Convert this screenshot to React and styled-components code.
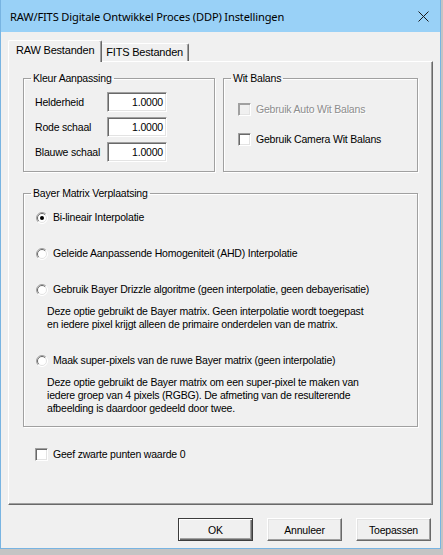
import React from 'react';
import styled, { createGlobalStyle } from 'styled-components';

const GlobalStyle = createGlobalStyle`
  html, body {
    margin: 0;
    padding: 0;
    background: #c4c4c4;
  }
  body {
    font-family: "Liberation Sans", Arial, sans-serif;
    font-size: 10.5px;
    letter-spacing: -0.2px;
    color: #000;
  }
`;

const Window = styled.div`
  width: 441px;
  height: 549px;
  box-sizing: border-box;
  border: 1px solid #78b4e2;
  border-top: none;
  background: #f0f0f0;
  display: flex;
  flex-direction: column;
`;

const TitleBar = styled.div`
  flex: none;
  height: 32px;
  background: #99d1f7;
  display: flex;
  align-items: center;
  justify-content: space-between;
  padding: 0 11px 0 9px;
  font-family: "Noto Sans", sans-serif;
  font-size: 11.1px;
  letter-spacing: -0.15px;
  color: #000;
`;

const Body = styled.div`
  display: flex;
  flex-direction: column;
  padding: 7px 7px 0 7px;
`;

const TabStrip = styled.div`
  display: flex;
  align-items: flex-end;
  height: 22px;
  padding-left: 2px;
`;

const Tab = styled.div`
  position: relative;
  box-sizing: border-box;
  height: ${p => (p.active ? '22px' : '18px')};
  margin: ${p => (p.active ? '0 -2px -1px -2px' : '0')};
  padding: ${p => (p.active ? '3px 7px 0' : '2px 5px 0')};
  z-index: ${p => (p.active ? 1 : 0)};
  background: #f0f0f0;
  border-top: 1px solid #fff;
  border-left: 1px solid #fff;
  border-right: 1px solid #696969;
  border-radius: 2px 2px 0 0;
  box-shadow: inset -1px 0 0 #a0a0a0;
  font-size: 11px;
  white-space: nowrap;
`;

const Panel = styled.div`
  flex: none;
  height: 444px;
  box-sizing: border-box;
  border-top: 1px solid #fff;
  border-left: 1px solid #fff;
  border-right: 1px solid #696969;
  border-bottom: 1px solid #696969;
  box-shadow: inset -1px -1px 0 #a0a0a0;
  padding: 10px 14px 0 14px;
  display: flex;
  flex-direction: column;
`;

const TopRow = styled.div`
  display: grid;
  grid-template-columns: 192px 1fr;
  column-gap: 8px;
`;

const Group = styled.fieldset`
  margin: 0;
  padding: 0;
  min-width: 0;
  height: ${p => p.height || 'auto'};
  box-sizing: border-box;
  border: 1px solid #a0a0a0;
  box-shadow: inset 1px 1px 0 #fff, 1px 1px 0 #fff;
`;

const Legend = styled.legend`
  margin-left: 7px;
  padding: 0 2px;
  line-height: 13px;
`;

const FieldGrid = styled.div`
  display: grid;
  grid-template-columns: 72px 60px;
  row-gap: 5px;
  align-items: center;
  padding: 7px 0 0 11px;
`;

const FieldLabel = styled.span`
  line-height: 13px;
  white-space: nowrap;
`;

const NumberBox = styled.div`
  box-sizing: border-box;
  height: 20px;
  background: #fff;
  border: 1px solid;
  border-color: #a0a0a0 #fff #fff #a0a0a0;
  box-shadow: inset 1px 1px 0 #696969, inset -1px -1px 0 #e3e3e3;
  text-align: right;
  padding: 2px 3px 0 0;
  line-height: 14px;
`;

const CheckList = styled.div`
  display: flex;
  flex-direction: column;
  gap: 17px;
  padding: 18px 0 0 14px;
`;

const CheckRow = styled.label`
  display: flex;
  align-items: center;
  gap: 5px;
  line-height: 13px;
  color: ${p => (p.disabled ? '#8d8d8d' : '#000')};
  text-shadow: ${p => (p.disabled ? '1px 1px 0 #fff' : 'none')};
  margin: ${p => p.margin || '0'};
`;

const Box = styled.span`
  flex: none;
  box-sizing: border-box;
  width: 13px;
  height: 13px;
  background: ${p => (p.disabled ? '#f0f0f0' : '#fff')};
  border: 1px solid;
  border-color: #a0a0a0 #fff #fff #a0a0a0;
  box-shadow: ${p => (p.disabled
    ? 'inset 1px 1px 0 #a0a0a0, inset -1px -1px 0 #e3e3e3'
    : 'inset 1px 1px 0 #696969, inset -1px -1px 0 #e3e3e3')};
`;

const BayerGroup = styled(Group)`
  margin-top: 15px;
`;

const OptionList = styled.div`
  display: flex;
  flex-direction: column;
  gap: 23px;
  padding: 11px 0 11px 12px;
`;

const Option = styled.div`
  display: flex;
  flex-direction: column;
`;

const RadioRow = styled.label`
  display: flex;
  align-items: center;
  gap: 5px;
  line-height: 13px;
`;

const Description = styled.div`
  margin: 9px 0 0 11px;
  line-height: 13px;
`;

const ButtonRow = styled.div`
  display: flex;
  justify-content: flex-end;
  gap: 14px;
  margin-top: 13px;
  padding-right: 2px;
`;

const Button = styled.div`
  box-sizing: border-box;
  width: 75px;
  height: 23px;
  display: flex;
  align-items: center;
  justify-content: center;
  background: #f0f0f0;
  border: 1px solid;
  border-color: ${p => (p.primary ? '#3c3c3c' : '#fff #696969 #696969 #fff')};
  box-shadow: ${p => (p.primary
    ? 'inset 1px 1px 0 #fff, inset -1px -1px 0 #696969, inset -2px -2px 0 #a0a0a0'
    : 'inset -1px -1px 0 #a0a0a0, inset 1px 1px 0 #e3e3e3')};
`;

const CloseIcon = () => (
  <svg width="11" height="11" viewBox="0 0 11 11">
    <path d="M0.5 0.5 L10.5 10.5 M10.5 0.5 L0.5 10.5" stroke="#1a1a1a" strokeWidth="1" fill="none" />
  </svg>
);

const Radio = ({ checked }) => (
  <svg width="12" height="12" viewBox="0 0 12 12">
    <circle cx="6" cy="6" r="5.5" fill="#fff" />
    <path d="M2.1 9.9 A5.5 5.5 0 0 1 9.9 2.1" stroke="#a0a0a0" fill="none" />
    <path d="M2.8 9.2 A4.5 4.5 0 0 1 9.2 2.8" stroke="#696969" fill="none" />
    <path d="M9.9 2.1 A5.5 5.5 0 0 1 2.1 9.9" stroke="#fff" fill="none" />
    <path d="M9.2 2.8 A4.5 4.5 0 0 1 2.8 9.2" stroke="#e3e3e3" fill="none" />
    {checked && <circle cx="6" cy="6" r="2" fill="#000" />}
  </svg>
);

const options = [
  { label: 'Bi-lineair Interpolatie', checked: true },
  { label: 'Geleide Aanpassende Homogeniteit (AHD) Interpolatie' },
  {
    label: 'Gebruik Bayer Drizzle algoritme (geen interpolatie, geen debayerisatie)',
    desc: [
      'Deze optie gebruikt de Bayer matrix. Geen interpolatie wordt toegepast',
      'en iedere pixel krijgt alleen de primaire onderdelen van de matrix.',
    ],
  },
  {
    label: 'Maak super-pixels van de ruwe Bayer matrix (geen interpolatie)',
    desc: [
      'Deze optie gebruikt de Bayer matrix om een super-pixel te maken van',
      'iedere groep van 4 pixels (RGBG). De afmeting van de resulterende',
      'afbeelding is daardoor gedeeld door twee.',
    ],
  },
];

const fields = ['Helderheid', 'Rode schaal', 'Blauwe schaal'];

export default function App() {
  return (
    <>
      <GlobalStyle />
      <Window>
        <TitleBar>
          <span>RAW/FITS Digitale Ontwikkel Proces (DDP) Instellingen</span>
          <CloseIcon />
        </TitleBar>
        <Body>
          <TabStrip>
            <Tab active>RAW Bestanden</Tab>
            <Tab>FITS Bestanden</Tab>
          </TabStrip>
          <Panel>
            <TopRow>
              <Group height="100px">
                <Legend>Kleur Aanpassing</Legend>
                <FieldGrid>
                  {fields.map(f => (
                    <React.Fragment key={f}>
                      <FieldLabel>{f}</FieldLabel>
                      <NumberBox>1.0000</NumberBox>
                    </React.Fragment>
                  ))}
                </FieldGrid>
              </Group>
              <Group height="100px">
                <Legend>Wit Balans</Legend>
                <CheckList>
                  <CheckRow disabled>
                    <Box disabled />
                    Gebruik Auto Wit Balans
                  </CheckRow>
                  <CheckRow>
                    <Box />
                    Gebruik Camera Wit Balans
                  </CheckRow>
                </CheckList>
              </Group>
            </TopRow>
            <BayerGroup>
              <Legend>Bayer Matrix Verplaatsing</Legend>
              <OptionList>
                {options.map(o => (
                  <Option key={o.label}>
                    <RadioRow>
                      <Radio checked={o.checked} />
                      {o.label}
                    </RadioRow>
                    {o.desc && (
                      <Description>
                        {o.desc.map(line => <div key={line}>{line}</div>)}
                      </Description>
                    )}
                  </Option>
                ))}
              </OptionList>
            </BayerGroup>
            <CheckRow margin="21px 0 0 12px">
              <Box />
              Geef zwarte punten waarde 0
            </CheckRow>
          </Panel>
          <ButtonRow>
            <Button primary>OK</Button>
            <Button>Annuleer</Button>
            <Button>Toepassen</Button>
          </ButtonRow>
        </Body>
      </Window>
    </>
  );
}
